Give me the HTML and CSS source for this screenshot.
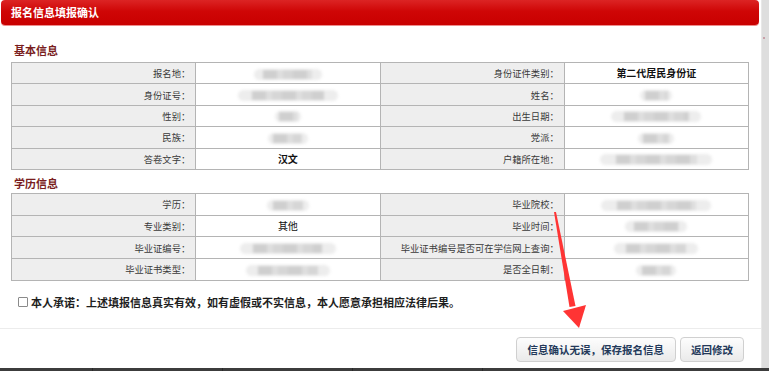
FILE: index.html
```html
<!DOCTYPE html>
<html lang="zh-CN">
<head>
<meta charset="utf-8">
<title>报名信息填报确认</title>
<link rel="stylesheet" href="styles.css">
</head>
<body>
<div class="screen">
  <div class="window">
    <div class="dialog">
      <div class="titlebar">报名信息填报确认</div>
      <div class="body">
        <h3 class="section-title first">基本信息</h3>
        <table class="info">
          <tr>
            <td class="k">报名地：</td><td class="v"><span class="blur w68"></span></td>
            <td class="k">身份证件类别：</td><td class="v strong">第二代居民身份证</td>
          </tr>
          <tr>
            <td class="k">身份证号：</td><td class="v"><span class="blur w100"></span></td>
            <td class="k">姓名：</td><td class="v"><span class="blur w32"></span></td>
          </tr>
          <tr>
            <td class="k">性别：</td><td class="v"><span class="blur w26"></span></td>
            <td class="k">出生日期：</td><td class="v"><span class="blur w90"></span></td>
          </tr>
          <tr>
            <td class="k">民族：</td><td class="v"><span class="blur w40"></span></td>
            <td class="k">党派：</td><td class="v"><span class="blur w36"></span></td>
          </tr>
          <tr>
            <td class="k">答卷文字：</td><td class="v strong">汉文</td>
            <td class="k">户籍所在地：</td><td class="v"><span class="blur w112"></span></td>
          </tr>
        </table>

        <h3 class="section-title second">学历信息</h3>
        <table class="info edu">
          <tr>
            <td class="k">学历：</td><td class="v"><span class="blur w42"></span></td>
            <td class="k">毕业院校：</td><td class="v"><span class="blur w110"></span></td>
          </tr>
          <tr>
            <td class="k">专业类别：</td><td class="v">其他</td>
            <td class="k">毕业时间：</td><td class="v"><span class="blur w62"></span></td>
          </tr>
          <tr>
            <td class="k">毕业证编号：</td><td class="v"><span class="blur w96"></span></td>
            <td class="k">毕业证书编号是否可在学信网上查询：</td><td class="v"><span class="blur w84"></span></td>
          </tr>
          <tr>
            <td class="k">毕业证书类型：</td><td class="v"><span class="blur w84"></span></td>
            <td class="k">是否全日制：</td><td class="v"><span class="blur w40"></span></td>
          </tr>
        </table>

        <label class="pledge"><input type="checkbox" class="check"><span>本人承诺：上述填报信息真实有效，如有虚假或不实信息，本人愿意承担相应法律后果。</span></label>
      </div>
      <div class="footer">
        <button class="btn primary">信息确认无误，保存报名信息</button>
        <button class="btn back">返回修改</button>
      </div>
    </div>
    <div class="scrollbar"><span class="scroll-dot"></span></div>
  </div>
  <div class="taskbar">
    <span class="seg"></span><span class="seg"></span><span class="seg"></span><span class="seg"></span>
  </div>
  <svg class="arrow" width="769" height="371" viewBox="0 0 769 371">
    <polygon points="554,212 556,212 575.5,306 569.5,307" fill="#ff3434"/>
    <polygon points="563,311 586,305 579,328" fill="#ff3434"/>
  </svg>
</div>
</body>
</html>
```

FILE: styles.css
```css
* { box-sizing: border-box; }

body {
  margin: 0;
  font-family: "Noto Sans CJK SC", "Noto Sans", sans-serif;
  background: #fff;
}

.screen {
  position: relative;
  width: 769px;
  height: 371px;
  overflow: hidden;
  background: #fff;
}

.window {
  display: flex;
  height: 368px;
}

.dialog {
  width: 761px;
  display: flex;
  flex-direction: column;
}

.titlebar {
  margin: 0 2px 0 1px;
  height: 25px;
  border-radius: 4px;
  background: linear-gradient(#dc2424, #cf0606 45%, #c80000);
  box-shadow: 0 1px 0 #ee8c8c;
  color: #fff;
  font-size: 11px;
  font-weight: bold;
  line-height: 25px;
  padding-left: 10px;
}

.body {
  flex: 1;
  padding: 0 12px 0 11px;
}

.section-title {
  margin: 0 0 0 3px;
  font-size: 11px;
  line-height: 14px;
  font-weight: bold;
  color: #7a1e1e;
}

.section-title.first { margin-top: 18px; margin-bottom: 5px; }
.section-title.second { margin-top: 6px; margin-bottom: 3px; }

.info {
  width: 738px;
  border-collapse: collapse;
  table-layout: fixed;
  border: 1px solid #a4a4a4;
}

.info td {
  border: 1px solid #b4b4b4;
  height: 21.4px;
  padding: 0;
  font-size: 9.3px;
  line-height: 12px;
  color: #3a3a3a;
  vertical-align: middle;
}

.info.edu td { height: 21.7px; }

.info td.k {
  background: #eeeeee;
  text-align: right;
  padding-right: 5px;
  white-space: nowrap;
}

.info td.v {
  background: #fff;
  text-align: center;
  color: #111;
  font-size: 10px;
}

.info td.strong { font-weight: bold; }

.blur {
  display: inline-block;
  height: 11px;
  vertical-align: middle;
  border-radius: 6px;
  background:
    repeating-linear-gradient(90deg, #cfcfcf 0 14px, #dedede 14px 20px, #d6d6d6 20px 30px) center / 72% 9px no-repeat,
    #ededed;
  filter: blur(1.4px);
}

.w26 { width: 26px; }
.w32 { width: 32px; }
.w36 { width: 36px; }
.w40 { width: 40px; }
.w42 { width: 42px; }
.w62 { width: 62px; }
.w68 { width: 68px; }
.w84 { width: 84px; }
.w90 { width: 90px; }
.w96 { width: 96px; }
.w100 { width: 100px; }
.w110 { width: 110px; }
.w112 { width: 112px; }

.pledge {
  display: flex;
  align-items: center;
  gap: 3px;
  margin-top: 14px;
  padding-left: 7px;
  font-size: 11px;
  line-height: 14px;
  font-weight: bold;
  color: #1e1e1e;
}

.check {
  appearance: none;
  -webkit-appearance: none;
  margin: 0;
  width: 10px;
  height: 10px;
  border: 1px solid #8a8a8a;
  border-radius: 1px;
  background: #fff;
}

.footer {
  height: 40px;
  border-top: 1px solid #ececec;
  display: flex;
  justify-content: flex-end;
  align-items: flex-start;
  gap: 4px;
  padding: 8px 17px 0 0;
}

.btn {
  height: 25px;
  border: 1px solid #d0d0d0;
  border-radius: 4px;
  background: linear-gradient(#fdfdfd, #eaeaea);
  font-family: "Noto Sans CJK SC", "Noto Sans", sans-serif;
  font-size: 10.5px;
  font-weight: bold;
  color: #23395a;
  line-height: 23px;
  margin: 0;
}

.btn.primary { padding: 0 11px; }
.btn.back { padding: 0 10px; }

.scrollbar {
  position: relative;
  width: 8px;
  background: #dedede;
  border-left: 1px solid #e8e8e8;
}

.scroll-dot {
  position: absolute;
  left: 1px;
  top: 37px;
  width: 2px;
  height: 2px;
  background: #c8a0a8;
}

.taskbar {
  display: flex;
  height: 3px;
  background: #3c3c3c;
}

.taskbar .seg {
  width: 130px;
  border-right: 1px solid #2a2a2a;
}

.taskbar .seg:first-child { width: 93px; }

.arrow {
  position: absolute;
  left: 0;
  top: 0;
  pointer-events: none;
}
```
